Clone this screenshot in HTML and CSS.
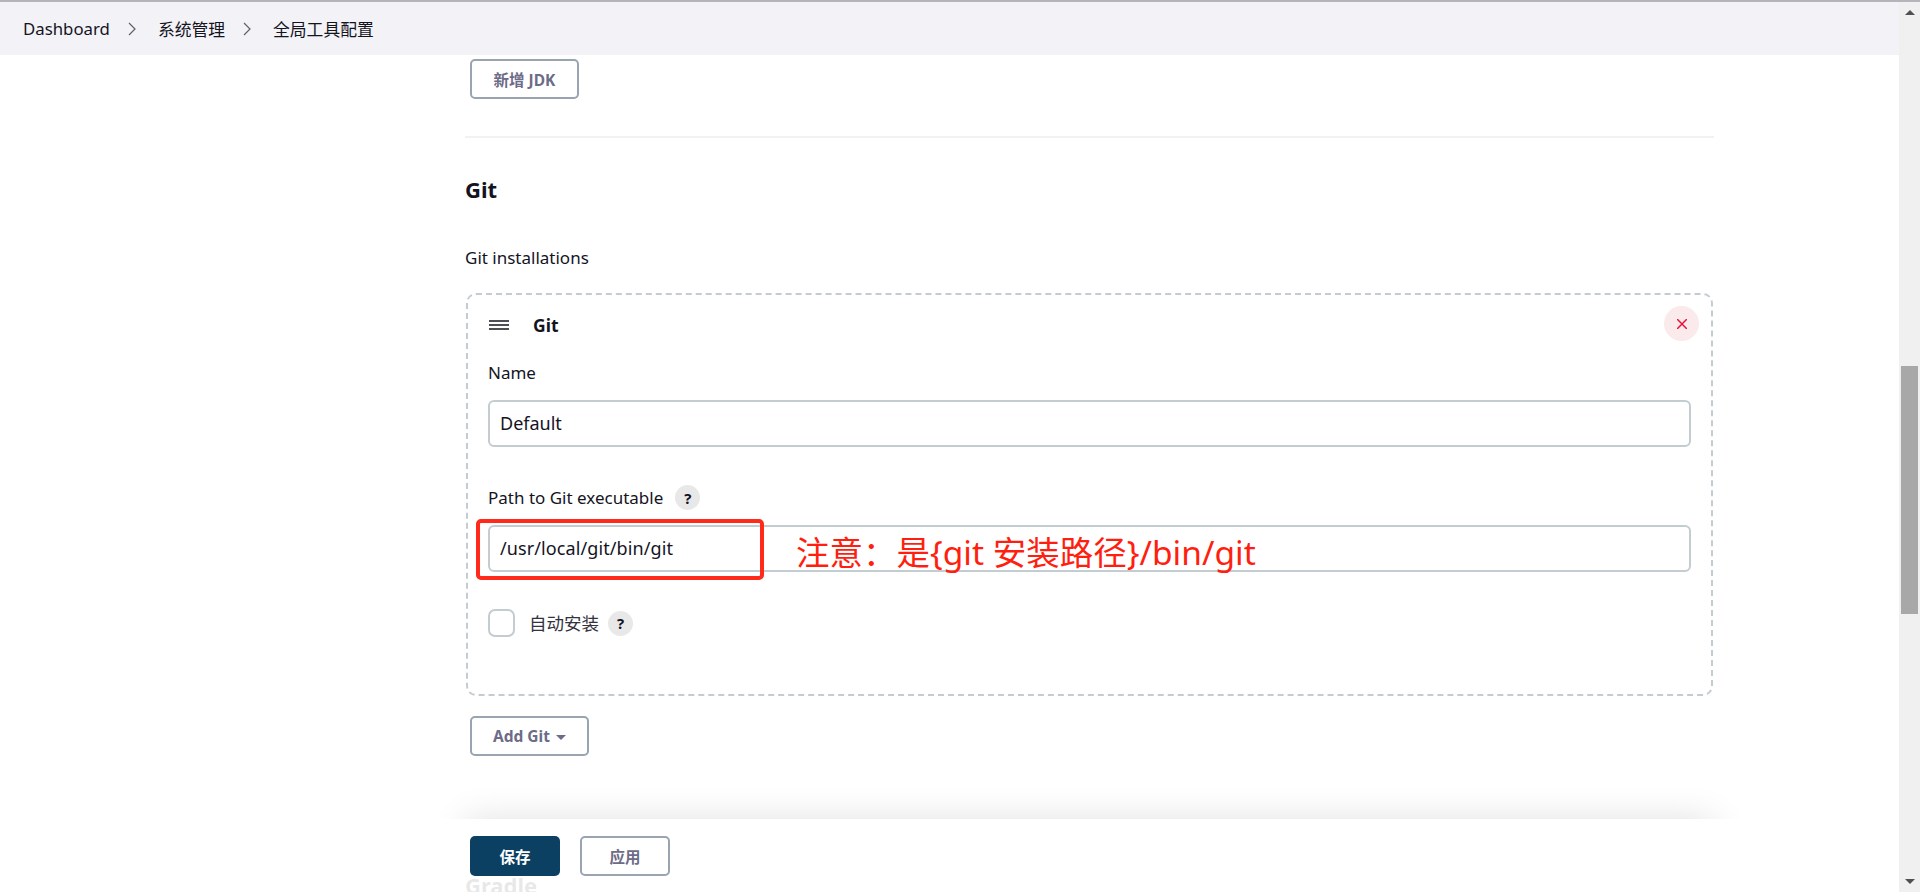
FILE: index.html
```html
<!DOCTYPE html>
<html lang="en">
<head>
    <meta charset="UTF-8">
    <meta name="viewport" content="width=device-width, initial-scale=1.0">
    <title>全局工具配置 - Jenkins</title>
    <link rel="stylesheet" href="styles.css">
</head>
<body>
    <div class="window">
        <div class="view">
            <nav class="breadcrumbs">
                <a class="crumb">Dashboard</a>
                <svg class="chevron" viewBox="0 0 8 14"><path d="M1 1l6 6-6 6"/></svg>
                <a class="crumb">系统管理</a>
                <svg class="chevron" viewBox="0 0 8 14"><path d="M1 1l6 6-6 6"/></svg>
                <a class="crumb">全局工具配置</a>
            </nav>

            <div class="layout">
                <main class="content">
                    <button class="btn btn-add" type="button">新增 JDK</button>
                    <hr class="section-line">

                    <h2 class="section-title">Git</h2>
                    <p class="group-label">Git installations</p>

                    <div class="repeatable">
                        <div class="repeatable-head">
                            <svg class="handle" viewBox="0 0 20 10"><path d="M0 1h20M0 5h20M0 9h20"/></svg>
                            <b class="repeatable-title">Git</b>
                            <button class="btn-delete" type="button" aria-label="Delete">
                                <svg viewBox="0 0 10 10"><path d="M0 0l10 10M10 0L0 10"/></svg>
                            </button>
                        </div>

                        <label class="field-label" for="git-name">Name</label>
                        <input class="field-input" type="text" id="git-name" value="Default">

                        <label class="field-label field-label-path" for="git-path">Path to Git executable <span class="help">?</span></label>
                        <input class="field-input field-input-path" type="text" id="git-path" value="/usr/local/git/bin/git">

                        <div class="check-row">
                            <input class="check" type="checkbox" id="git-auto">
                            <label class="check-label" for="git-auto">自动安装</label>
                            <span class="help">?</span>
                        </div>

                        <!-- annotation drawn on top of the screenshot -->
                        <div class="note-box"></div>
                        <div class="note-text">注意：是{git 安装路径}/bin/git</div>
                    </div>

                    <button class="btn btn-add btn-add-git" type="button">Add Git <i class="caret"></i></button>

                    <h2 class="section-title section-gradle">Gradle</h2>
                </main>
            </div>

            <div class="bottom-bar">
                <button class="btn btn-save" type="button">保存</button>
                <button class="btn btn-apply" type="button">应用</button>
            </div>
        </div>

        <div class="scrollbar">
            <i class="arrow arrow-up"></i>
            <div class="scroll-thumb"></div>
            <i class="arrow arrow-down"></i>
        </div>
    </div>
</body>
</html>
```

FILE: styles.css
```css
* {
    box-sizing: border-box;
}
html, body {
    height: 100%;
    margin: 0;
}
body {
    font-family: "Noto Sans", "Noto Sans CJK SC", sans-serif;
    font-size: 17px;
    color: #14141f;
    background-color: #fff;
    overflow: hidden;
}
.window {
    display: flex;
    height: 892px;
    border-top: 2px solid #b4b4bb;
}
.view {
    position: relative;
    flex: 1;
    min-width: 0;
    overflow: hidden;
}

/* fake browser scrollbar */
.scrollbar {
    display: flex;
    flex-direction: column;
    align-items: center;
    width: 21px;
    padding: 8px 0;
    background-color: #f0f0f0;
}
.scroll-thumb {
    width: 17px;
    height: 248px;
    margin-top: 351px;
    background-color: #a8a8a8;
}
.arrow {
    width: 0;
    height: 0;
    border-left: 5px solid transparent;
    border-right: 5px solid transparent;
}
.arrow-up {
    border-bottom: 5px solid #505050;
}
.arrow-down {
    margin-top: auto;
    border-top: 5px solid #505050;
}

/* breadcrumbs */
.breadcrumbs {
    display: flex;
    align-items: center;
    height: 53px;
    padding-left: 23px;
    background-color: #f2f2f7;
}
.crumb {
    font-size: 16.8px;
}
.chevron {
    width: 8px;
    height: 14px;
    margin: 0 22px 0 18px;
    fill: none;
    stroke: #5f5f68;
    stroke-width: 1.2;
}

/* main column */
.layout {
    padding-left: 465px;
}
.content {
    width: 1249px;
    padding-top: 4px;
}
.btn {
    height: 40px;
    border-radius: 5px;
    font-family: inherit;
    font-size: 15.5px;
    font-weight: 700;
    cursor: pointer;
}
.btn-add {
    display: block;
    width: 109px;
    margin-left: 5px;
    background: #fff;
    border: 2px solid #9aa4b0;
    color: #6d6b87;
}
.section-line {
    height: 2px;
    margin: 37px 0 0;
    border: 0;
    background-color: #f2f2f5;
}
.section-title {
    margin: 37px 0 0;
    height: 28px;
    font-size: 22px;
    line-height: 28px;
    font-weight: 700;
}
.group-label {
    margin: 44px 0 0;
    height: 22px;
    line-height: 22px;
}

/* repeatable block */
.repeatable {
    position: relative;
    height: 403px;
    margin: 24px 1px 0;
    padding: 0 20px;
    border: 2px dashed #c3ccd1;
    border-radius: 10px;
}
.repeatable-head {
    display: flex;
    align-items: center;
    height: 35px;
    margin-top: 11px;
}
.handle {
    width: 20px;
    height: 10px;
    margin: 3px 0 0 1px;
    fill: none;
    stroke: #14141f;
    stroke-width: 1.7;
}
.repeatable-title {
    margin: 3px 0 0 24px;
    font-size: 17.5px;
}
.btn-delete {
    display: flex;
    align-items: center;
    justify-content: center;
    width: 35px;
    height: 35px;
    margin-left: auto;
    margin-right: -8px;
    padding: 0;
    border: 0;
    border-radius: 50%;
    background-color: #fbeaec;
}
.btn-delete svg {
    width: 10px;
    height: 10px;
    fill: none;
    stroke: #e6123c;
    stroke-width: 1.5;
}
.field-label {
    display: flex;
    align-items: center;
    height: 24px;
    margin-top: 19px;
}
.field-label-path {
    gap: 12px;
    height: 25px;
    margin-top: 38px;
}
.field-input {
    display: block;
    width: 100%;
    height: 47px;
    margin-top: 16px;
    padding: 0 10px 2px;
    border: 2px solid #c3ccd1;
    border-radius: 6px;
    font-family: inherit;
    font-size: 18px;
    color: #14141f;
    outline: none;
}
.field-input-path {
    margin-top: 15px;
    letter-spacing: 0.1px;
}
.help {
    display: inline-flex;
    align-items: center;
    justify-content: center;
    width: 25px;
    height: 25px;
    border-radius: 50%;
    background-color: #e8e8e8;
    font-size: 15px;
    font-weight: 700;
}
.check-row {
    display: flex;
    align-items: center;
    margin-top: 37px;
}
.check {
    appearance: none;
    width: 27px;
    height: 28px;
    margin: 0;
    border: 2px solid #c3ccd1;
    border-radius: 7px;
    background: #fff;
}
.check-label {
    margin-left: 14px;
    margin-right: 9px;
    padding-bottom: 2px;
    font-size: 17.5px;
    color: #33333d;
}

/* red annotation */
.note-box {
    position: absolute;
    left: 8px;
    top: 224px;
    width: 288px;
    height: 61px;
    border: 4px solid #ff2a1a;
    border-radius: 5px;
}
.note-text {
    position: absolute;
    left: 328px;
    top: 235px;
    font-size: 33.5px;
    line-height: 44px;
    white-space: nowrap;
    color: #ff1f10;
}

.btn-add-git {
    width: 119px;
    margin-top: 20px;
}
.caret {
    display: inline-block;
    margin-left: 2px;
    vertical-align: 2px;
    border: 5px solid transparent;
    border-top-color: #6d6b87;
    border-bottom: 0;
}
.section-gradle {
    margin-top: 115px;
}

.bottom-bar {
    position: absolute;
    left: 0;
    right: 0;
    bottom: 0;
    display: flex;
    gap: 20px;
    height: 73px;
    padding: 17px 0 0 470px;
    background-color: rgba(255, 255, 255, 0.9);
}
.bottom-bar::before {
    content: "";
    position: absolute;
    top: 0;
    left: 465px;
    width: 1249px;
    height: 73px;
    box-shadow: 0 0 36px rgba(0, 0, 0, 0.12);
    clip-path: inset(-40px -40px 100% -40px);
}
.btn-save, .btn-apply {
    width: 90px;
}
.btn-save {
    border: 0;
    background-color: #0b4062;
    color: #fff;
}
.btn-apply {
    background: #fff;
    border: 2px solid #9aa4b0;
    color: #6d6b87;
}
```
